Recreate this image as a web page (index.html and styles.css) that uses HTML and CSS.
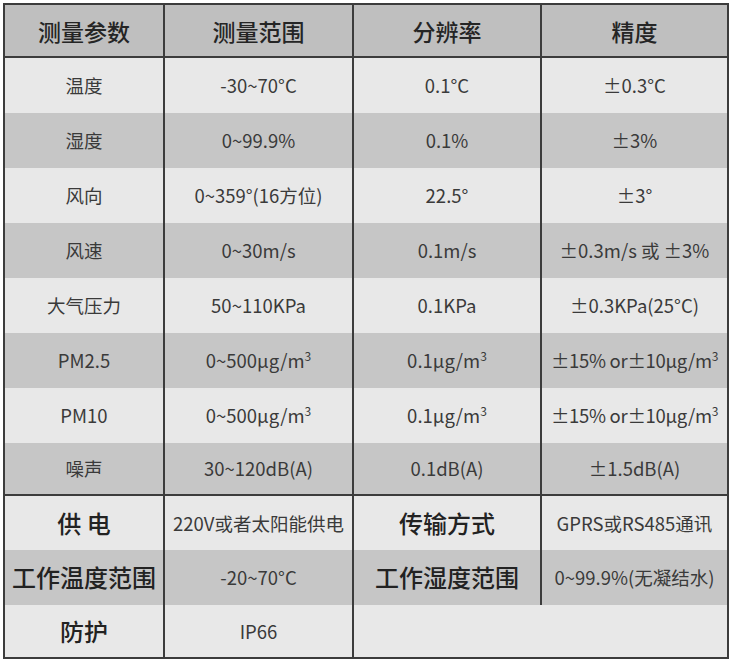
FILE: index.html
```html
<!DOCTYPE html>
<html lang="zh-CN">
<head>
<meta charset="utf-8">
<title>测量参数</title>
<link rel="stylesheet" href="styles.css">
</head>
<body>
<table class="spec">
  <thead>
    <tr class="head">
      <th class="c1">测量参数</th>
      <th class="c2">测量范围</th>
      <th class="c3">分辨率</th>
      <th class="c4">精度</th>
    </tr>
  </thead>
  <tbody>
    <tr class="light"><td>温度</td><td>-30~70°C</td><td>0.1°C</td><td>±0.3°C</td></tr>
    <tr class="dark"><td>湿度</td><td>0~99.9%</td><td>0.1%</td><td>±3%</td></tr>
    <tr class="light"><td>风向</td><td>0~359°(16方位)</td><td>22.5°</td><td>±3°</td></tr>
    <tr class="dark"><td>风速</td><td>0~30m/s</td><td>0.1m/s</td><td>±0.3m/s 或 ±3%</td></tr>
    <tr class="light"><td>大气压力</td><td>50~110KPa</td><td>0.1KPa</td><td>±0.3KPa(25°C)</td></tr>
    <tr class="dark"><td>PM2.5</td><td>0~500μg/m<sup>3</sup></td><td>0.1μg/m<sup>3</sup></td><td class="tight">±15% or±10μg/m<sup>3</sup></td></tr>
    <tr class="light"><td>PM10</td><td>0~500μg/m<sup>3</sup></td><td>0.1μg/m<sup>3</sup></td><td class="tight">±15% or±10μg/m<sup>3</sup></td></tr>
    <tr class="dark last"><td>噪声</td><td>30~120dB(A)</td><td>0.1dB(A)</td><td>±1.5dB(A)</td></tr>
  </tbody>
  <tbody class="extra">
    <tr class="light r1"><td class="label">供 电</td><td>220V或者太阳能供电</td><td class="label">传输方式</td><td>GPRS或RS485通讯</td></tr>
    <tr class="dark r2"><td class="label">工作温度范围</td><td>-20~70°C</td><td class="label">工作湿度范围</td><td>0~99.9%(无凝结水)</td></tr>
    <tr class="light r3"><td class="label">防护</td><td>IP66</td><td class="blank" colspan="2"></td></tr>
  </tbody>
</table>
</body>
</html>
```

FILE: styles.css
```css
html, body {
  margin: 0;
  padding: 0;
  background: #ffffff;
}

.spec {
  margin: 3px;
  width: 726px;
  table-layout: fixed;
  border-collapse: separate;
  border-spacing: 0;
  border: 2px solid #3c3c3c;
  font-family: "Noto Sans CJK SC", "Noto Sans", sans-serif;
  color: #3a3a3a;
}

.spec th,
.spec td {
  box-sizing: border-box;
  padding: 0;
  text-align: center;
  vertical-align: middle;
  border-right: 2px solid #3c3c3c;
  white-space: nowrap;
  overflow: hidden;
}

.spec th:last-child,
.spec td:last-child {
  border-right: none;
}

.c1 { width: 160px; }
.c2 { width: 189px; }
.c3 { width: 188px; }
.c4 { width: 185px; }

.head th {
  height: 53px;
  background: #bfbfbf;
  border-bottom: 2px solid #3c3c3c;
  font-size: 23px;
  font-weight: 500;
  color: #252525;
}

.spec td {
  height: 55px;
  font-size: 18.5px;
  line-height: 1.2;
}

.light td { background: #e8e8e8; }
.dark td { background: #c6c6c6; }

.last td {
  height: 53px;
  border-bottom: 2px solid #3c3c3c;
}

.spec sup {
  font-size: 0.65em;
  line-height: 0;
  vertical-align: 0.6em;
}

.tight {
  letter-spacing: -0.3px;
}

.extra .r1 td { height: 54px; }
.extra .r2 td { height: 55px; }
.extra .r3 td { height: 52px; }

.spec td.label {
  font-size: 24px;
  font-weight: 500;
  color: #222222;
}

.spec td.blank {
  border-right: none;
}
```
